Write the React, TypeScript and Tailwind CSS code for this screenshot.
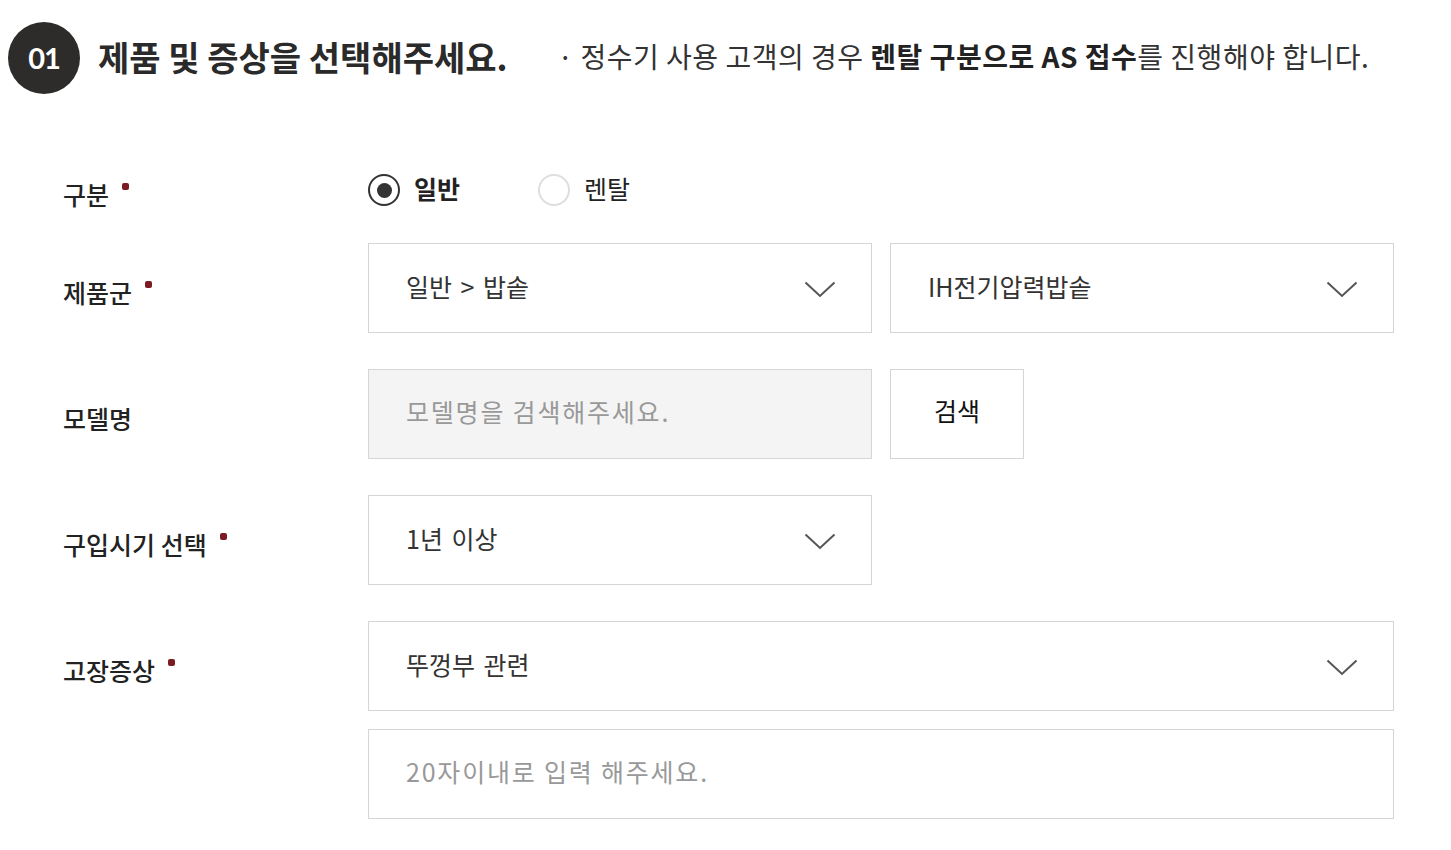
import React, { useState } from "react";

const Required = () => (
  <span className="ml-[13px] mt-[4px] inline-block w-[7px] h-[7px] rounded-[2px] bg-[#7a1a22]" />
);

const Label = ({ text, required }: { text: string; required?: boolean }) => (
  <div className="w-[305px] shrink-0 flex items-start pt-[8px] text-[25px] font-medium text-[#222]">
    <span className="leading-[30px]">{text}</span>
    {required && <Required />}
  </div>
);

const Chevron = () => (
  <svg width="32" height="17" viewBox="0 0 32 17" fill="none" className="mt-[3px]">
    <polyline points="1.5,1.5 16,15 30.5,1.5" stroke="#555" strokeWidth="2" />
  </svg>
);

const SelectBox = ({ value, wide }: { value: string; wide?: boolean }) => (
  <div
    className={`${wide ? "w-[1026px]" : "w-[504px]"} h-[90px] border border-[#d5d5d5] bg-white flex items-center justify-between pl-[37px] pr-[35px] cursor-pointer`}
  >
    <span className="text-[25px] text-[#333] [word-spacing:3px] -mt-[2px]">{value}</span>
    <Chevron />
  </div>
);

const Radio = ({ label, checked, onClick }: { label: string; checked: boolean; onClick: () => void }) => (
  <label className="flex items-center cursor-pointer" onClick={onClick}>
    <span
      className={`w-[32px] h-[32px] rounded-full border-2 flex items-center justify-center ${
        checked ? "border-[#333]" : "border-[#dedede]"
      }`}
    >
      {checked && <span className="w-[15px] h-[15px] rounded-full bg-[#333]" />}
    </span>
    <span
      className={`ml-[14px] text-[25px] text-[#222] -mt-[2px] ${checked ? "font-bold" : "font-normal"}`}
    >
      {label}
    </span>
  </label>
);

const App = () => {
  const [type, setType] = useState<string>("일반");

  return (
    <div className="w-[1451px] h-[850px] bg-white font-['Noto_Sans_CJK_KR',sans-serif] text-[#222]">
      {/* Step header */}
      <div className="pt-[22px] pl-[8px] flex items-center">
        <div className="w-[72px] h-[72px] rounded-full bg-[#2e2c2b] flex items-center justify-center">
          <span className="font-['Lato',sans-serif] font-bold text-[29px] text-white tracking-[-1px]">01</span>
        </div>
        <h1 className="ml-[18px] text-[34px] font-bold text-[#2a2a2a] -mt-[4px]">
          제품 및 증상을 선택해주세요.
        </h1>
        <p className="ml-[50px] text-[28px] text-[#333] tracking-[0.5px] -mt-[4px]">
          · 정수기 사용 고객의 경우 <b className="font-bold text-[#222]">렌탈 구분으로 AS 접수</b>를 진행해야 합니다.
        </p>
      </div>

      {/* Form */}
      <div className="mt-[76px] ml-[63px]">
        <div className="flex items-center h-[40px]">
          <Label text="구분" required />
          <div className="flex items-center gap-[78px]">
            <Radio label="일반" checked={type === "일반"} onClick={() => setType("일반")} />
            <Radio label="렌탈" checked={type === "렌탈"} onClick={() => setType("렌탈")} />
          </div>
        </div>

        <div className="flex items-center mt-[33px]">
          <Label text="제품군" required />
          <div className="flex gap-[18px]">
            <SelectBox value="일반 > 밥솥" />
            <SelectBox value="IH전기압력밥솥" />
          </div>
        </div>

        <div className="flex items-center mt-[36px]">
          <Label text="모델명" />
          <div className="flex gap-[18px]">
            <input
              className="w-[504px] h-[90px] border border-[#d5d5d5] bg-[#f4f4f4] pl-[37px] pb-[6px] text-[25px] tracking-[1.8px] outline-none placeholder:text-[#999]"
              placeholder="모델명을 검색해주세요."
              readOnly
            />
            <button className="w-[134px] h-[90px] border border-[#d5d5d5] bg-white text-[25px] text-[#111] pb-[6px]">
              검색
            </button>
          </div>
        </div>

        <div className="flex items-center mt-[36px]">
          <Label text="구입시기 선택" required />
          <SelectBox value="1년 이상" />
        </div>

        <div className="flex items-center mt-[36px]">
          <Label text="고장증상" required />
          <SelectBox value="뚜껑부 관련" wide />
        </div>

        <div className="flex mt-[18px] pl-[305px]">
          <input
            className="w-[1026px] h-[90px] border border-[#d5d5d5] bg-white pl-[37px] pb-[6px] text-[25px] tracking-[1.8px] outline-none placeholder:text-[#999]"
            placeholder="20자이내로 입력 해주세요."
          />
        </div>
      </div>
    </div>
  );
};

export default App;
